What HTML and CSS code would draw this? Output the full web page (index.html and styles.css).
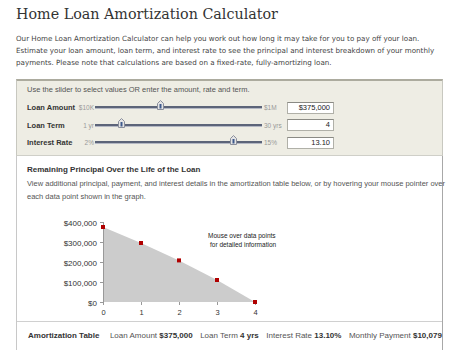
FILE: index.html
```html
<!DOCTYPE html>
<html>
<head>
<meta charset="utf-8">
<link rel="stylesheet" href="styles.css">
</head>
<body>
<div class="page">
  <h1 class="title">Home Loan Amortization Calculator</h1>
  <p class="intro">Our Home Loan Amortization Calculator can help you work out how long it may take for you to pay off your loan. Estimate your loan amount, loan term, and interest rate to see the principal and interest breakdown of your monthly payments. Please note that calculations are based on a fixed-rate, fully-amortizing loan.</p>

  <div class="calc">
    <div class="hint">Use the slider to select values OR enter the amount, rate and term.</div>
    <div class="row">
      <span class="label">Loan Amount</span>
      <span class="min">$10K</span>
      <span class="track"><span class="thumb" style="left:62px"><svg width="7" height="10" viewBox="0 0 7 10"><path d="M0.5 3.5 L3.5 0.5 L6.5 3.5 L6.5 9.5 L0.5 9.5 Z" fill="#e4e4e4" stroke="#8a8f9c"/><rect x="2.5" y="4" width="2" height="4.5" fill="#3f5a8c"/></svg></span></span>
      <span class="max">$1M</span>
      <span class="field">$375,000</span>
    </div>
    <div class="row">
      <span class="label">Loan Term</span>
      <span class="min">1 yr</span>
      <span class="track"><span class="thumb" style="left:23px"><svg width="7" height="10" viewBox="0 0 7 10"><path d="M0.5 3.5 L3.5 0.5 L6.5 3.5 L6.5 9.5 L0.5 9.5 Z" fill="#e4e4e4" stroke="#8a8f9c"/><rect x="2.5" y="4" width="2" height="4.5" fill="#3f5a8c"/></svg></span></span>
      <span class="max">30 yrs</span>
      <span class="field">4</span>
    </div>
    <div class="row">
      <span class="label">Interest Rate</span>
      <span class="min">2%</span>
      <span class="track"><span class="thumb" style="left:135px"><svg width="7" height="10" viewBox="0 0 7 10"><path d="M0.5 3.5 L3.5 0.5 L6.5 3.5 L6.5 9.5 L0.5 9.5 Z" fill="#e4e4e4" stroke="#8a8f9c"/><rect x="2.5" y="4" width="2" height="4.5" fill="#3f5a8c"/></svg></span></span>
      <span class="max">15%</span>
      <span class="field">13.10</span>
    </div>
  </div>

  <div class="graph">
    <h2 class="graph-title">Remaining Principal Over the Life of the Loan</h2>
    <p class="graph-desc">View additional principal, payment, and interest details in the amortization table below, or by hovering your mouse pointer over each data point shown in the graph.</p>
    <svg class="chart" width="400" height="106" viewBox="0 0 400 106">
      <polygon points="63,15 101,31 139,48.4 177,68 215,90 63,90" fill="#cccccc"/>
      <line x1="63.5" y1="10" x2="63.5" y2="90" stroke="#999" stroke-width="1"/>
      <g stroke="#999" stroke-width="1">
        <line x1="60" y1="10.5" x2="63" y2="10.5"/>
        <line x1="60" y1="30.5" x2="63" y2="30.5"/>
        <line x1="60" y1="50.5" x2="63" y2="50.5"/>
        <line x1="60" y1="70.5" x2="63" y2="70.5"/>
        <line x1="60" y1="90.5" x2="63" y2="90.5"/>
        <line x1="63.5" y1="90" x2="63.5" y2="93"/>
        <line x1="101.5" y1="90" x2="101.5" y2="93"/>
        <line x1="139.5" y1="90" x2="139.5" y2="93"/>
        <line x1="177.5" y1="90" x2="177.5" y2="93"/>
        <line x1="215.5" y1="90" x2="215.5" y2="93"/>
      </g>
      <g class="ylab" text-anchor="end">
        <text x="57" y="13.5">$400,000</text>
        <text x="57" y="33.5">$300,000</text>
        <text x="57" y="53.5">$200,000</text>
        <text x="57" y="73.5">$100,000</text>
        <text x="57" y="93.5">$0</text>
      </g>
      <g class="xlab" text-anchor="middle">
        <text x="63.5" y="103">0</text>
        <text x="101.5" y="103">1</text>
        <text x="139.5" y="103">2</text>
        <text x="177.5" y="103">3</text>
        <text x="215.5" y="103">4</text>
      </g>
      <g fill="#b00000">
        <rect x="61" y="13" width="4" height="4"/>
        <rect x="99" y="29" width="4" height="4"/>
        <rect x="137" y="46.4" width="4" height="4"/>
        <rect x="175" y="66" width="4" height="4"/>
        <rect x="213" y="88" width="4" height="4"/>
      </g>
      <text class="note" x="168" y="25.5">Mouse over data points</text>
      <text class="note" x="170" y="35">for detailed information</text>
    </svg>
    <div class="amort">
      <span class="amort-title">Amortization Table</span>
      <span class="item">Loan Amount <b>$375,000</b></span>
      <span class="item">Loan Term <b>4 yrs</b></span>
      <span class="item">Interest Rate <b>13.10%</b></span>
      <span class="item">Monthly Payment <b>$10,079</b></span>
    </div>
  </div>
</div>
</body>
</html>
```

FILE: styles.css
```css
* { box-sizing: border-box; }
html, body { margin: 0; padding: 0; background: #fff; }
body { font-family: "Liberation Sans", Arial, sans-serif; color: #333; }
.page { width: 427px; margin-left: 16px; padding-top: 4px; }

.title {
  margin: 0;
  font-family: "DejaVu Serif", Georgia, serif;
  font-weight: normal;
  font-size: 14.3px;
  line-height: 20px;
  color: #333;
}
.intro {
  margin: 9px 0 0 0;
  font-family: "DejaVu Sans", Verdana, sans-serif;
  font-size: 7.15px;
  line-height: 12px;
  color: #444;
}

.calc {
  margin-top: 10px;
  background: #eeede4;
  border-top: 2px solid #acab9e;
  border-left: 1px solid #c8c8c0;
  border-right: 1px solid #c8c8c0;
  border-bottom: 1px solid #cfcfc8;
  padding: 3px 10px 3px 10px;
}
.hint { font-size: 7.5px; color: #555; line-height: 12px; margin-bottom: 3px; }
.row { display: flex; align-items: center; height: 17.5px; }
.label { width: 44px; font-weight: bold; font-size: 7.5px; color: #333; white-space: nowrap; }
.min { width: 24px; text-align: right; font-size: 6.5px; color: #999; padding-right: 1px; white-space: nowrap; }
.track {
  position: relative;
  width: 167px;
  height: 3px;
  background: linear-gradient(#5c6479 0, #5c6479 2px, #b4b8c4 2px);
}
.thumb { position: absolute; top: -6px; line-height: 0; }
.max { width: 25px; font-size: 6.5px; color: #999; padding-left: 2px; white-space: nowrap; }
.field {
  width: 47px; height: 12px;
  background: #fff;
  border: 1px solid #b0b0a8;
  border-top-color: #8a8a84;
  font-size: 7.5px;
  line-height: 10px;
  text-align: right;
  padding-right: 3px;
  color: #222;
}

.graph {
  border-left: 1px solid #c8c8c8;
  border-right: 1px solid #a8a8a8;
  padding: 8px 0 0 10px;
  height: 200px;
}
.graph-title { margin: 0; font-size: 8px; font-weight: bold; line-height: 12px; color: #333; }
.graph-desc { margin: 1px 0 0 0; font-size: 7.5px; line-height: 13px; color: #555; width: 420px; }
.chart { display: block; margin-left: 13px; margin-top: 9px; }
.ylab text { font-size: 8px; fill: #333; font-family: "Liberation Sans", Arial, sans-serif; }
.xlab text { font-size: 7.5px; fill: #333; font-family: "Liberation Sans", Arial, sans-serif; }
.note { font-size: 6.5px; fill: #222; font-family: "Liberation Sans", Arial, sans-serif; }

.amort {
  margin: 3px 0 0 -10px;
  border-top: 1px solid #d0d0d0;
  padding: 9px 0 0 11px;
  display: flex;
  gap: 7.5px;
  font-size: 8px;
  color: #555;
  white-space: nowrap;
}
.amort-title { font-weight: bold; color: #333; margin-right: 3px; }
.item b { color: #333; }
```
